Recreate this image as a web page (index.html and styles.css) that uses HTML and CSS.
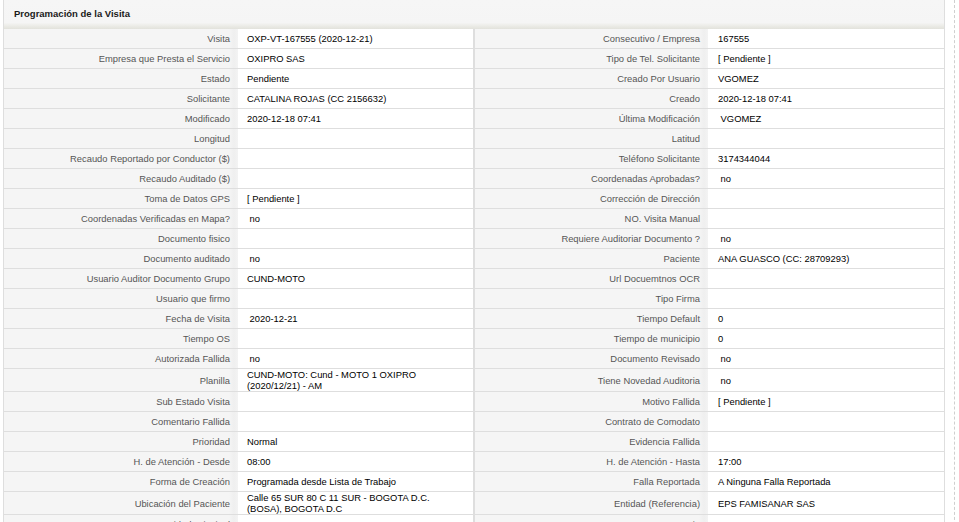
FILE: index.html
```html
<!DOCTYPE html>
<html lang="es">
<head>
<meta charset="utf-8">
<title>Programación de la Visita</title>
<link rel="stylesheet" href="styles.css">
</head>
<body>
<div class="wrap">
  <div class="panel">
    <div class="panel-head">Programación de la Visita</div>
    <table class="details">
      <tbody>
        <tr><td class="lbl first">Visita</td><td class="val">OXP-VT-167555 (2020-12-21)</td><td class="lbl mid">Consecutivo / Empresa</td><td class="val last">167555</td></tr>
        <tr><td class="lbl first">Empresa que Presta el Servicio</td><td class="val">OXIPRO SAS</td><td class="lbl mid">Tipo de Tel. Solicitante</td><td class="val last">[ Pendiente ]</td></tr>
        <tr><td class="lbl first">Estado</td><td class="val">Pendiente</td><td class="lbl mid">Creado Por Usuario</td><td class="val last">VGOMEZ</td></tr>
        <tr><td class="lbl first">Solicitante</td><td class="val">CATALINA ROJAS (CC 2156632)</td><td class="lbl mid">Creado</td><td class="val last">2020-12-18 07:41</td></tr>
        <tr><td class="lbl first">Modificado</td><td class="val">2020-12-18 07:41</td><td class="lbl mid">Última Modificación</td><td class="val last">&nbsp;VGOMEZ</td></tr>
        <tr><td class="lbl first">Longitud</td><td class="val"></td><td class="lbl mid">Latitud</td><td class="val last"></td></tr>
        <tr><td class="lbl first">Recaudo Reportado por Conductor ($)</td><td class="val"></td><td class="lbl mid">Teléfono Solicitante</td><td class="val last">3174344044</td></tr>
        <tr><td class="lbl first">Recaudo Auditado ($)</td><td class="val"></td><td class="lbl mid">Coordenadas Aprobadas?</td><td class="val last">&nbsp;no</td></tr>
        <tr><td class="lbl first">Toma de Datos GPS</td><td class="val">[ Pendiente ]</td><td class="lbl mid">Corrección de Dirección</td><td class="val last"></td></tr>
        <tr><td class="lbl first">Coordenadas Verificadas en Mapa?</td><td class="val">&nbsp;no</td><td class="lbl mid">NO. Visita Manual</td><td class="val last"></td></tr>
        <tr><td class="lbl first">Documento fisico</td><td class="val"></td><td class="lbl mid">Requiere Auditoriar Documento ?</td><td class="val last">&nbsp;no</td></tr>
        <tr><td class="lbl first">Documento auditado</td><td class="val">&nbsp;no</td><td class="lbl mid">Paciente</td><td class="val last">ANA GUASCO (CC: 28709293)</td></tr>
        <tr><td class="lbl first">Usuario Auditor Documento Grupo</td><td class="val">CUND-MOTO</td><td class="lbl mid">Url Docuemtnos OCR</td><td class="val last"></td></tr>
        <tr><td class="lbl first">Usuario que firmo</td><td class="val"></td><td class="lbl mid">Tipo Firma</td><td class="val last"></td></tr>
        <tr><td class="lbl first">Fecha de Visita</td><td class="val">&nbsp;2020-12-21</td><td class="lbl mid">Tiempo Default</td><td class="val last">0</td></tr>
        <tr><td class="lbl first">Tiempo OS</td><td class="val"></td><td class="lbl mid">Tiempo de municipio</td><td class="val last">0</td></tr>
        <tr><td class="lbl first">Autorizada Fallida</td><td class="val">&nbsp;no</td><td class="lbl mid">Documento Revisado</td><td class="val last">&nbsp;no</td></tr>
        <tr><td class="lbl first">Planilla</td><td class="val">CUND-MOTO: Cund - MOTO 1 OXIPRO (2020/12/21) - AM</td><td class="lbl mid">Tiene Novedad Auditoria</td><td class="val last">&nbsp;no</td></tr>
        <tr><td class="lbl first">Sub Estado Visita</td><td class="val"></td><td class="lbl mid">Motivo Fallida</td><td class="val last">[ Pendiente ]</td></tr>
        <tr><td class="lbl first">Comentario Fallida</td><td class="val"></td><td class="lbl mid">Contrato de Comodato</td><td class="val last"></td></tr>
        <tr><td class="lbl first">Prioridad</td><td class="val">Normal</td><td class="lbl mid">Evidencia Fallida</td><td class="val last"></td></tr>
        <tr><td class="lbl first">H. de Atención - Desde</td><td class="val">08:00</td><td class="lbl mid">H. de Atención - Hasta</td><td class="val last">17:00</td></tr>
        <tr><td class="lbl first">Forma de Creación</td><td class="val">Programada desde Lista de Trabajo</td><td class="lbl mid">Falla Reportada</td><td class="val last">A Ninguna Falla Reportada</td></tr>
        <tr><td class="lbl first">Ubicación del Paciente</td><td class="val">Calle 65 SUR 80 C 11 SUR - BOGOTA D.C. (BOSA), BOGOTA D.C</td><td class="lbl mid">Entidad (Referencia)</td><td class="val last">EPS FAMISANAR SAS</td></tr>
        <tr><td class="lbl first">Entidad Principal</td><td class="val">EPS FAMISANAR SAS</td><td class="lbl mid">Convenio</td><td class="val last">EPS FAMISANAR SAS</td></tr>
      </tbody>
    </table>
  </div>
</div>
</body>
</html>
```

FILE: styles.css
```css
html, body {
  margin: 0;
  padding: 0;
  background: #ffffff;
}

body {
  font-family: "Liberation Sans", Arial, sans-serif;
  font-size: 9.4px;
  color: #111;
  overflow: hidden;
}

.wrap {
  width: 954px;
  min-height: 522px;
  border-right: 1px dashed #cfcfcf;
}

.panel {
  margin-left: 3px;
  width: 942px;
}

.panel-head {
  height: 29px;
  box-sizing: border-box;
  padding: 0 0 0 10px;
  border-left: 1px solid #dedede;
  border-right: 1px solid #dedede;
  background: linear-gradient(to bottom, #f6f6f6 0, #f5f5f5 78%, #ebebe6 90%, #e2e2dc 100%);
  font-weight: bold;
  font-size: 9.5px;
  color: #1a1a1a;
  line-height: 28px;
}

.details {
  width: 942px;
  table-layout: fixed;
  border-collapse: separate;
  border-spacing: 0;
}

.details td {
  box-sizing: border-box;
  height: 20px;
  line-height: 11px;
  padding: 0;
  vertical-align: middle;
  border-bottom: 1px solid #dedede;
}

.lbl {
  text-align: right;
  color: #555;
  padding-right: 8px !important;
  background: linear-gradient(to right, #f5f5f5 0, #f5f5f5 calc(100% - 9px), #efefef calc(100% - 4px), #f3f3f3 100%);
}

.val {
  background: #ffffff;
  color: #000;
  padding-left: 9px !important;
  padding-right: 6px !important;
}

.first {
  width: 235px;
  border-left: 1px solid #dedede;
}

.details td.val:nth-child(2) {
  width: 235px;
}

.mid {
  width: 235px;
  border-left: 2px solid #dedede;
}

.last {
  width: 237px;
  border-right: 1px solid #dedede;
  padding-left: 10px !important;
}
```
